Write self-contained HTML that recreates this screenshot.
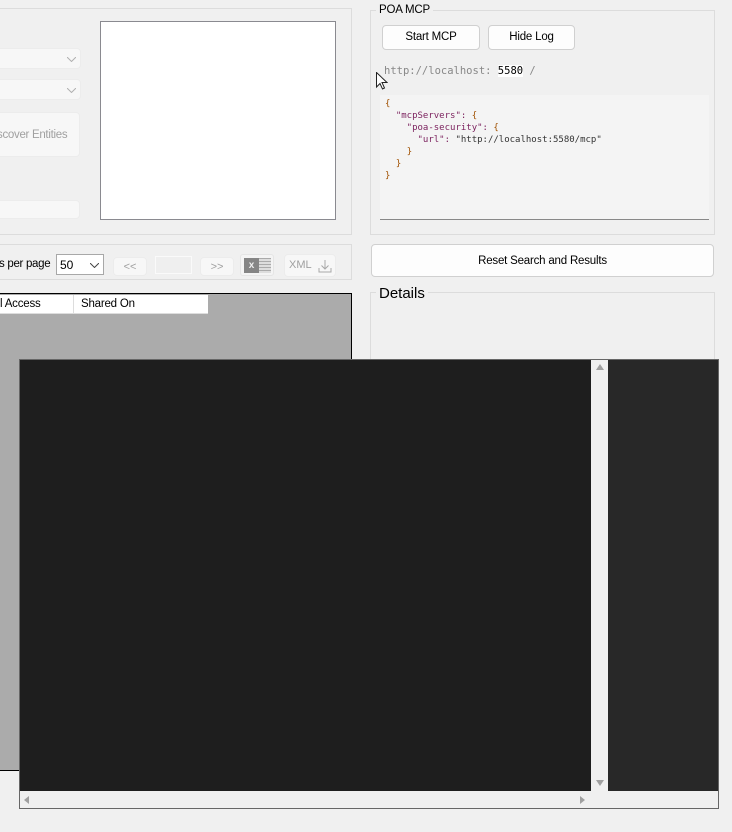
<!DOCTYPE html>
<html><head><style>
*{box-sizing:border-box;margin:0;padding:0}
body{width:732px;height:832px;background:#f0f0f0;position:relative;overflow:hidden;font-family:"Liberation Sans",sans-serif;font-size:12px;color:#000}
.a{position:absolute}
.grp{border:1px solid #dcdcdc}
.btn{background:#fdfdfd;border:1px solid #d0d0d0;border-radius:4px;text-align:center;font-size:11.5px;letter-spacing:-0.2px}
.dis{background:#f7f7f7;border:1px solid #ececec;border-radius:4px;color:#a0a0a0}
.mono{font-family:"DejaVu Sans Mono","Liberation Mono",monospace}
.chev{position:absolute;width:9px;height:5px}
</style></head><body>
<div class="a grp" style="left:-2px;top:8px;width:354px;height:227px"></div>
<div class="a" style="left:100px;top:21px;width:236px;height:199px;background:#fff;border:1px solid #8a8a90"></div>
<div class="a dis" style="left:-4px;top:48px;width:85px;height:21px"><svg class="chev" style="left:70px;top:8px" viewBox="0 0 9 5"><path d="M0 0L4.5 4.5L9 0" fill="none" stroke="#b0b0b0"/></svg></div>
<div class="a dis" style="left:-4px;top:79px;width:85px;height:21px"><svg class="chev" style="left:70px;top:8px" viewBox="0 0 9 5"><path d="M0 0L4.5 4.5L9 0" fill="none" stroke="#b0b0b0"/></svg></div>
<div class="a dis" style="left:-4px;top:112px;width:84px;height:45px;text-align:right;padding:16px 13px 0 0;white-space:nowrap;overflow:hidden;font-size:11.5px;letter-spacing:-0.3px">scover Entities</div>
<div class="a dis" style="left:-4px;top:200px;width:84px;height:19px"></div>

<div class="a grp" style="left:-2px;top:244px;width:354px;height:36px"></div>
<div class="a" style="left:-1px;top:258px;font-size:11.5px;letter-spacing:-0.3px">s per page</div>
<div class="a" style="left:56px;top:254px;width:48px;height:21px;background:#fff;border:1px solid #a8a8a8;padding:3px 0 0 3px">50<svg class="chev" style="left:33px;top:8px" viewBox="0 0 9 5"><path d="M0 0L4.5 4.5L9 0" fill="none" stroke="#444"/></svg></div>
<div class="a dis" style="left:113px;top:257px;width:34px;height:19px;text-align:center;padding-top:3px;font-size:11px">&lt;&lt;</div>
<div class="a" style="left:155px;top:256px;width:37px;height:18px;background:#efefef;border:1px solid #fafafa"></div>
<div class="a dis" style="left:200px;top:257px;width:34px;height:19px;text-align:center;padding-top:3px;font-size:11px">&gt;&gt;</div>
<div class="a" style="left:240px;top:254px;width:34px;height:22px;background:#f4f4f4;border:1px solid #e5e5e5;border-radius:3px"><div class="a" style="left:3px;top:3px;width:15px;height:15px;background:#858585;color:#eee;font-size:10px;font-weight:bold;text-align:center;line-height:15px">x</div><div class="a" style="left:18px;top:3px;width:12px;height:15px;background:repeating-linear-gradient(#aaa 0 1px,#ddd 1px 3px)"></div></div>
<div class="a dis" style="left:284px;top:254px;width:52px;height:23px;padding:4px 0 0 4px;font-size:11px">XML<svg class="a" style="left:33px;top:4px" width="14" height="14" viewBox="0 0 14 14"><path d="M7 1V10M3.5 6.5L7 10L10.5 6.5M1 9V13H13V9" fill="none" stroke="#a8a8a8"/></svg></div>

<div class="a" style="left:-2px;top:293px;width:354px;height:478px;background:#ababab;border:1px solid #000"></div>
<div class="a" style="left:0;top:295px;width:208px;height:19px;background:#fff;border-bottom:1px solid #ddd"></div>
<div class="a" style="left:73px;top:295px;width:1px;height:19px;background:#ddd"></div>
<div class="a" style="left:0;top:298px;font-size:11.5px;letter-spacing:-0.2px">l Access</div>
<div class="a" style="left:81px;top:298px;font-size:11.5px;letter-spacing:-0.2px">Shared On</div>

<div class="a grp" style="left:370px;top:10px;width:345px;height:225px"></div>
<div class="a" style="left:376px;top:4px;background:#f0f0f0;padding:0 3px;font-size:11.5px;letter-spacing:-0.2px">POA MCP</div>
<div class="a btn" style="left:382px;top:25px;width:98px;height:25px;padding-top:5px">Start MCP</div>
<div class="a btn" style="left:488px;top:25px;width:87px;height:25px;padding-top:5px">Hide Log</div>
<div class="a mono" style="left:384px;top:65px;font-size:10.5px;color:#888">http://localhost: <span style="background:#fff;color:#000">5580</span> /</div>
<svg class="a" style="left:376px;top:72px" width="12" height="18" viewBox="0 0 12 18"><path d="M0.5 0.5V15L4 11.5L6.5 17L8.5 16L6 10.5H11Z" fill="#fff" stroke="#222"/></svg>
<div class="a mono" style="left:380px;top:95px;width:329px;height:125px;background:#f4f4f4;border-bottom:1px solid #888;padding:3px 5px;font-size:9px;line-height:12px;white-space:pre;color:#7a1f5c"><span style="color:#a05000">{</span>
  "mcpServers": <span style="color:#a05000">{</span>
    "poa-security": <span style="color:#a05000">{</span>
      "url": <span style="color:#333">"http://localhost:5580/mcp"</span>
    <span style="color:#a05000">}</span>
  <span style="color:#a05000">}</span>
<span style="color:#a05000">}</span></div>
<div class="a btn" style="left:371px;top:244px;width:343px;height:33px;padding-top:10px">Reset Search and Results</div>
<div class="a grp" style="left:370px;top:292px;width:345px;height:80px"></div>
<div class="a" style="left:376px;top:285px;background:#f0f0f0;padding:0 3px;font-size:15px">Details</div>

<div class="a" style="left:19px;top:359px;width:700px;height:450px;background:#f0f0f0;border:1px solid #666"></div>
<div class="a" style="left:20px;top:360px;width:571px;height:431px;background:#1e1e1e"></div>
<div class="a" style="left:608px;top:360px;width:110px;height:431px;background:#282828"></div>
<div class="a" style="left:596px;top:364px;width:0;height:0;border:4px solid transparent;border-bottom:6px solid #a0a0a0;border-top:0"></div>
<div class="a" style="left:596px;top:780px;width:0;height:0;border:4px solid transparent;border-top:6px solid #a0a0a0;border-bottom:0"></div>
<div class="a" style="left:24px;top:796px;width:0;height:0;border:4px solid transparent;border-right:5px solid #a0a0a0;border-left:0"></div>
<div class="a" style="left:580px;top:796px;width:0;height:0;border:4px solid transparent;border-left:5px solid #a0a0a0;border-right:0"></div>
</body></html>
